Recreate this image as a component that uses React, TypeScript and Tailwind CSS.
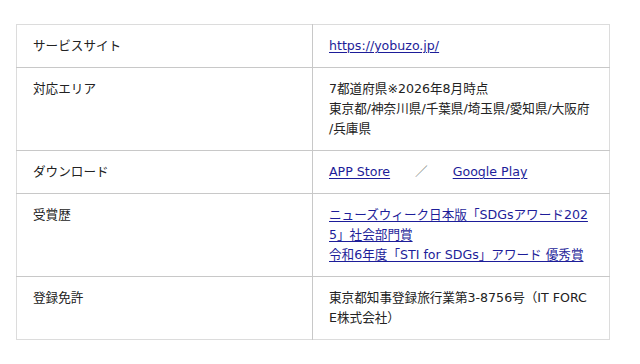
import type { ReactNode } from "react";

type Row = { label: string; body: ReactNode };

const link = "text-[#1d1d99] underline underline-offset-2";

const ROWS: Row[] = [
  {
    label: "サービスサイト",
    body: (
      <a href="#" className={link}>
        https://yobuzo.jp/
      </a>
    ),
  },
  {
    label: "対応エリア",
    body: (
      <>
        7都道府県※2026年8月時点
        <br />
        <span className="whitespace-nowrap">東京都/神奈川県/千葉県/埼玉県/愛知県/大阪府</span>
        <br />
        /兵庫県
      </>
    ),
  },
  {
    label: "ダウンロード",
    body: (
      <>
        <a href="#" className={link}>
          APP Store
        </a>
        <span className="mx-[25px] text-[#777]">／</span>
        <a href="#" className={link}>
          Google Play
        </a>
      </>
    ),
  },
  {
    label: "受賞歴",
    body: (
      <>
        <a href="#" className={link}>
          ニューズウィーク日本版「SDGsアワード2025」社会部門賞
        </a>
        <br />
        <a href="#" className={link}>
          令和6年度「STI for SDGs」アワード 優秀賞
        </a>
      </>
    ),
  },
  {
    label: "登録免許",
    body: "東京都知事登録旅行業第3-8756号（IT FORCE株式会社）",
  },
];

export default function App() {
  return (
    <div
      className="min-h-[364px] bg-white px-4 pt-6 text-[12.6px] leading-5 text-[#222]"
      style={{ fontFamily: '"DejaVu Sans", "Noto Sans CJK JP", sans-serif' }}
    >
      <table className="w-[594px] table-fixed border-collapse border border-[#dcdcdc]">
        <colgroup>
          <col className="w-[296px]" />
          <col />
        </colgroup>
        <tbody>
          {ROWS.map((row) => (
            <tr key={row.label} className="border-t border-[#c8c8c8] first:border-t-0">
              <th className="border-r border-[#c8c8c8] px-4 py-[11px] text-left align-top font-normal">
                {row.label}
              </th>
              <td className="px-4 py-[11px] align-top break-all">{row.body}</td>
            </tr>
          ))}
        </tbody>
      </table>
    </div>
  );
}
